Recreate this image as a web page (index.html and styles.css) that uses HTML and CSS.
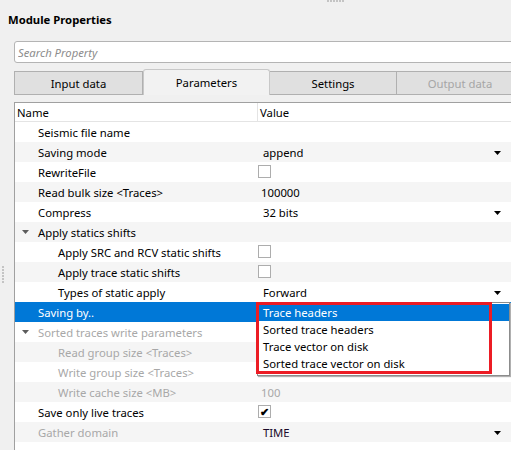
FILE: index.html
```html
<html>
<head>
<title>Module Properties</title>
<link rel="stylesheet" href="styles.css">
</head>
<body>

<div class="gripTop"><span></span><span></span><span></span><span></span><span></span><span></span></div>
<div class="title">Module Properties</div>

<div class="dock">
	<div class="gutter">
		<div class="gripSide"><span></span><span></span><span></span><span></span><span></span><span></span></div>
	</div>
	<div class="panel">
		<input class="search" type="text" placeholder="Search Property">

		<div class="tabs">
			<div class="tab">Input data</div>
			<div class="tab active">Parameters</div>
			<div class="tab">Settings</div>
			<div class="tab disabled">Output data</div>
		</div>

		<div class="props">
			<div class="head">
				<div class="name">Name</div>
				<div class="value">Value</div>
			</div>
			<div class="row">
				<div class="name">Seismic file name</div>
				<div class="value"></div>
			</div>
			<div class="row">
				<div class="name">Saving mode</div>
				<div class="value combo">append</div>
			</div>
			<div class="row">
				<div class="name">RewriteFile</div>
				<div class="value"><span class="check"></span></div>
			</div>
			<div class="row">
				<div class="name">Read bulk size &lt;Traces&gt;</div>
				<div class="value num">100000</div>
			</div>
			<div class="row">
				<div class="name">Compress</div>
				<div class="value combo">32 bits</div>
			</div>
			<div class="row group">
				<div class="name"><span class="caret"></span>Apply statics shifts</div>
				<div class="value"></div>
			</div>
			<div class="row child">
				<div class="name">Apply SRC and RCV static shifts</div>
				<div class="value"><span class="check"></span></div>
			</div>
			<div class="row child">
				<div class="name">Apply trace static shifts</div>
				<div class="value"><span class="check"></span></div>
			</div>
			<div class="row child">
				<div class="name">Types of static apply</div>
				<div class="value combo">Forward</div>
			</div>
			<div class="row selected">
				<div class="name">Saving by..</div>
				<div class="value">
					<div class="popup">
						<div class="item current">Trace headers</div>
						<div class="item">Sorted trace headers</div>
						<div class="item">Trace vector on disk</div>
						<div class="item">Sorted trace vector on disk</div>
					</div>
					<div class="mark"></div>
				</div>
			</div>
			<div class="row group off">
				<div class="name"><span class="caret"></span>Sorted traces write parameters</div>
				<div class="value"></div>
			</div>
			<div class="row child off">
				<div class="name">Read group size &lt;Traces&gt;</div>
				<div class="value num"></div>
			</div>
			<div class="row child off">
				<div class="name">Write group size &lt;Traces&gt;</div>
				<div class="value num">1000</div>
			</div>
			<div class="row child off">
				<div class="name">Write cache size &lt;MB&gt;</div>
				<div class="value num">100</div>
			</div>
			<div class="row">
				<div class="name">Save only live traces</div>
				<div class="value"><span class="check on">&#10004;</span></div>
			</div>
			<div class="row off">
				<div class="name">Gather domain</div>
				<div class="value combo on">TIME</div>
			</div>
			<div class="row">
				<div class="name"></div>
				<div class="value"></div>
			</div>
		</div>
	</div>
</div>

</body>
</html>
```

FILE: styles.css
```css
body {
    margin: 0;
    width: 511px;
    height: 450px;
    overflow: hidden;
    background-color: #f0f0f0;
    font-family: "Noto Sans", "Open Sans", sans-serif;
    font-size: 11.3px;
    color: #000;
}

/* splitter handles */
.gripTop {
    display: flex;
    gap: 1px;
    height: 3px;
    padding-left: 327px;
}
.gripTop span, .gripSide span {
    width: 2px;
    height: 2px;
    background-color: #c4c4c4;
}
.gripSide {
    display: flex;
    flex-direction: column;
    gap: 1px;
    margin: 225px 0 0 2px;
}

.title {
    font-weight: bold;
    line-height: 16px;
    margin: 9px 0 0 8px;
}

.dock {
    display: flex;
    margin-top: 13px;
}
.gutter {
    width: 14px;
    flex: none;
}
.panel {
    width: 511px;
    flex: none;
}

.search {
    display: block;
    box-sizing: border-box;
    width: 511px;
    height: 22px;
    margin: 0;
    padding: 0 3px;
    border: 1px solid #b4b4b4;
    border-radius: 3px;
    background-color: #fff;
    font-family: inherit;
    font-size: 11.3px;
    outline: none;
}
.search::placeholder {
    color: #8c8c8c;
    font-style: italic;
}

/* tab bar */
.tabs {
    display: flex;
    align-items: flex-end;
    height: 26px;
    margin-top: 6px;
}
.tab {
    box-sizing: border-box;
    width: 127px;
    height: 24px;
    line-height: 23px;
    text-align: center;
    background-color: #e0e0e0;
    border: 1px solid #b0b0b0;
    border-left: none;
}
.tab:first-child {
    width: 129px;
    border-left: 1px solid #b0b0b0;
}
.tab.active {
    height: 26px;
    line-height: 26px;
    background-color: #f2f2f2;
    border: 1px solid #c8c8c8;
    border-bottom: none;
    border-radius: 3px 3px 0 0;
}
.tab.disabled {
    color: #a6a6a6;
}

/* property grid */
.props {
    margin-top: 7px;
    width: 496px;
    background-color: #fff;
    border-top: 1px solid #a0a0a0;
    border-left: 1px solid #a0a0a0;
}
.head, .row {
    display: flex;
}
.head {
    height: 18px;
    line-height: 19px;
    border-bottom: 1px solid #e4e4e4;
}
.head .name {
    padding-left: 2px;
    border-right: 1px solid #e4e4e4;
    box-sizing: border-box;
}
.head .value {
    padding-left: 2px;
}
.name {
    width: 243px;
    flex: none;
    white-space: nowrap;
}
.value {
    flex: 1;
    position: relative;
    white-space: nowrap;
}
.row {
    height: 20px;
    line-height: 21px;
}
.row:nth-child(odd) {
    background-color: #f5f5f5;
}
.row .name {
    box-sizing: border-box;
    padding-left: 23px;
}
.row.child .name {
    padding-left: 43px;
}
.row.group .name {
    padding-left: 7px;
    display: flex;
    align-items: center;
}
.caret {
    width: 7px;
    height: 4px;
    margin-right: 9px;
    background-color: #5c5c5c;
    clip-path: polygon(0 0, 100% 0, 50% 100%);
}
.row.selected {
    background-color: #0078d7;
    color: #fff;
}
.row.off {
    color: #a8a8a8;
}

.value.combo {
    padding-left: 5px;
}
.value.combo::after {
    content: "";
    position: absolute;
    right: 10px;
    top: 9px;
    width: 7px;
    height: 4px;
    background-color: #000;
    clip-path: polygon(0 0, 100% 0, 50% 100%);
}
.value.on {
    color: #1b0a2a;
}
.value.num {
    padding-left: 3px;
}
.check {
    display: inline-block;
    box-sizing: border-box;
    width: 13px;
    height: 13px;
    margin-top: 3px;
    vertical-align: top;
    border: 1px solid #adadad;
    background-color: #fff;
    font-size: 11px;
    font-weight: bold;
    line-height: 11px;
    text-align: center;
    color: #000;
}

/* open combo list */
.popup {
    position: absolute;
    top: 0;
    left: -1px;
    width: 253px;
    box-sizing: border-box;
    padding: 1px 0 3px;
    background-color: #fff;
    border: 1px solid #8c8c8c;
    box-shadow: 1px 1px 1px #b0b0b0;
    color: #000;
    line-height: 18px;
    z-index: 2;
}
.item {
    height: 17px;
    padding-left: 5px;
}
.item.current {
    background-color: #0078d7;
    color: #fff;
}
.mark {
    position: absolute;
    top: 0;
    left: -2px;
    width: 236px;
    height: 72px;
    box-sizing: border-box;
    border: 3px solid #ec1c24;
    z-index: 3;
}
```
